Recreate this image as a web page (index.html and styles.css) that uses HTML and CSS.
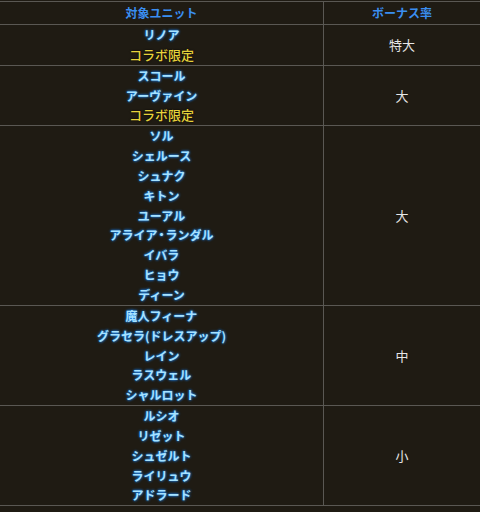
FILE: index.html
```html
<!DOCTYPE html>
<html lang="ja">
<head>
<meta charset="utf-8">
<link rel="stylesheet" href="styles.css">
</head>
<body>
<table class="bonus">
  <thead>
    <tr><th class="col-unit">対象ユニット</th><th class="col-rate">ボーナス率</th></tr>
  </thead>
  <tbody>
    <tr class="r1">
      <td class="units"><span class="name">リノア</span><span class="collab">コラボ限定</span></td>
      <td class="rate">特大</td>
    </tr>
    <tr class="r2">
      <td class="units"><span class="name">スコール</span><span class="name">アーヴァイン</span><span class="collab">コラボ限定</span></td>
      <td class="rate">大</td>
    </tr>
    <tr class="r3">
      <td class="units"><span class="name">ソル</span><span class="name">シェルース</span><span class="name">シュナク</span><span class="name">キトン</span><span class="name">ユーアル</span><span class="name">アライア<span class="dot">・</span>ランダル</span><span class="name">イバラ</span><span class="name">ヒョウ</span><span class="name">ディーン</span></td>
      <td class="rate">大</td>
    </tr>
    <tr class="r4">
      <td class="units"><span class="name">魔人フィーナ</span><span class="name">グラセラ(ドレスアップ)</span><span class="name">レイン</span><span class="name">ラスウェル</span><span class="name">シャルロット</span></td>
      <td class="rate">中</td>
    </tr>
    <tr class="r5">
      <td class="units"><span class="name">ルシオ</span><span class="name">リゼット</span><span class="name">シュゼルト</span><span class="name">ライリュウ</span><span class="name">アドラード</span></td>
      <td class="rate">小</td>
    </tr>
  </tbody>
</table>
</body>
</html>
```
FILE: styles.css
```css
html, body {
  margin: 0;
  padding: 0;
  background: #1f1b13;
}
body {
  padding-top: 1px;
  font-family: "Noto Sans CJK JP", "Noto Sans", sans-serif;
}
.bonus {
  width: 480px;
  border-collapse: collapse;
  table-layout: fixed;
}
.bonus th, .bonus td {
  border-top: 1px solid #5a5853;
  border-bottom: 1px solid #5a5853;
  padding: 0;
  text-align: center;
  vertical-align: middle;
}
.bonus th {
  height: 22px;
  line-height: 20px;
  font-size: 12px;
  font-weight: bold;
  color: #3a8ef0;
}
.col-unit { width: 323px; }
.col-rate, .rate {
  border-left: 1px solid #5a5853;
}
.units > span {
  display: block;
  line-height: 19.85px;
  font-size: 12px;
  font-weight: bold;
}
.units .dot {
  display: inline;
  font-feature-settings: "palt" 1;
  padding: 0 1px;
}
.name {
  color: #a6e2ff;
  text-shadow: 0 0 3px #1c8cff, 0 0 2px #0a5fc0;
}
.units > .collab {
  color: #e6d23a;
  font-size: 13px;
  font-weight: 500;
  text-shadow: 0 0 2px #000;
}
.rate {
  font-size: 13px;
  color: #e6e6e6;
}
```
